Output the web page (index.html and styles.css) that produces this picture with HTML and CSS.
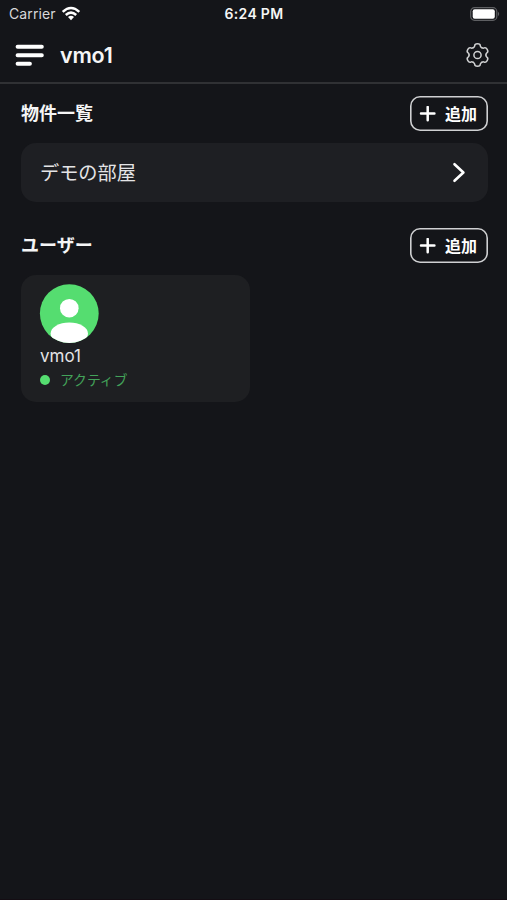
FILE: index.html
```html
<!DOCTYPE html>
<html lang="ja">
<head>
<meta charset="utf-8">
<title>vmo1</title>
<link rel="stylesheet" href="styles.css">
</head>
<body>
<div class="status">
  <div class="carrier"><span>Carrier</span>
    <svg width="20" height="16" viewBox="0 0 20 16" fill="none" stroke="#fff" stroke-width="2.5"><path d="M1.7 5.9Q10-1.9 18.3 5.9M4.8 9Q10 4.2 15.2 9"/><path d="M7 11.1Q10 8.6 13 11.1L10 14.2Z" fill="#fff" stroke="none"/></svg>
  </div>
  <time class="clock">6:24 PM</time>
  <svg class="battery" width="30" height="14" viewBox="0 0 30 14"><rect x=".7" y=".7" width="26.1" height="12.6" rx="3.8" fill="none" stroke="#5e5f62" stroke-width="1.2"/><rect x="2.7" y="2.3" width="22.1" height="9.4" rx="2" fill="#fff"/><path d="M28 4.8q2.4 2.2 0 4.4z" fill="#5e5f62"/></svg>
</div>
<header class="bar">
  <svg class="menu" width="30" height="24" viewBox="0 0 30 24" stroke="#fff" stroke-width="4" stroke-linecap="round"><path d="M2.6 3.7H26.8M2.6 12.2H26.8M2.6 20.7H14.9"/></svg>
  <h1>vmo1</h1>
  <svg class="gear" width="26" height="26" viewBox="-12.5 -13 26 26" fill="none" stroke="#d0d1d2" stroke-width="1.5" stroke-linecap="round">
    <defs><path id="tooth" d="M-4.2-7.3C-3.2-7.9-2.8-8.2-2.8-9.2C-2.8-10.8-2-11.2 0-11.2S2.8-10.8 2.8-9.2C2.8-8.2 3.2-7.9 4.2-7.3"/></defs>
    <use href="#tooth"/><use href="#tooth" transform="rotate(60)"/><use href="#tooth" transform="rotate(120)"/><use href="#tooth" transform="rotate(180)"/><use href="#tooth" transform="rotate(240)"/><use href="#tooth" transform="rotate(300)"/>
    <circle r="3.6"/>
  </svg>
</header>
<main>
  <section>
    <div class="head"><h2>物件一覧</h2>
      <button class="add"><svg width="17" height="16" viewBox="0 0 17 16" stroke="#fff" stroke-width="2.5" stroke-linecap="round"><path d="M8.7 .9V14.3M2 7.6H15.4"/></svg><span>追加</span></button></div>
    <div class="room"><span>デモの部屋</span>
      <svg width="14" height="22" viewBox="0 0 14 22" fill="none" stroke="#fff" stroke-width="2.6" stroke-linecap="round" stroke-linejoin="round"><path d="M2.5 2.2L11.4 10.5L2.5 18.8"/></svg></div>
  </section>
  <section class="users">
    <div class="head"><h2>ユーザー</h2>
      <button class="add"><svg width="17" height="16" viewBox="0 0 17 16" stroke="#fff" stroke-width="2.5" stroke-linecap="round"><path d="M8.7 .9V14.3M2 7.6H15.4"/></svg><span>追加</span></button></div>
    <div class="user">
      <svg class="avatar" width="60" height="60" viewBox="0 0 60 60"><defs><clipPath id="disc"><circle cx="30.3" cy="29.6" r="29.4"/></clipPath></defs><circle cx="30.3" cy="29.6" r="29.4" fill="#55dd70"/><g fill="#fff" clip-path="url(#disc)"><circle cx="30.3" cy="24.2" r="9.3"/><ellipse cx="30.3" cy="49.5" rx="18.7" ry="11"/></g></svg>
      <div class="name">vmo1</div>
      <div class="state"><i></i><span>アクティブ</span></div>
    </div>
  </section>
</main>
</body>
</html>
```
FILE: styles.css
```css
* { box-sizing: border-box; }
body {
  margin: 0;
  height: 900px;
  overflow: hidden;
  background: #141519;
  color: #f5f5f6;
  font-family: Inter, "Noto Sans CJK JP", sans-serif;
  border-bottom: 1px solid #140d13;
}
svg { display: block; flex: none; }
h1, h2 { margin: 0; }
.status {
  height: 27px;
  display: grid;
  grid-template-columns: 1fr auto 1fr;
  align-items: center;
  padding: 0 7px 0 9px;
  font-size: 14px;
}
.carrier { display: flex; align-items: center; gap: 5px; color: #d8d8da; letter-spacing: .1px; }
.clock { margin-right: 1px; font-weight: 600; font-size: 14px; letter-spacing: .3px; }
.battery { justify-self: end; }
.bar {
  height: 57px;
  display: flex;
  align-items: center;
  padding: 0 16px 0 15px;
  border-bottom: 2px solid #303134;
}
h1 { margin-left: 15px; font-size: 21.5px; font-weight: 600; letter-spacing: -.2px; }
.gear { margin-left: auto; }
main { padding: 12px 19px 0 21px; }
.head { height: 35px; display: flex; align-items: center; justify-content: space-between; }
h2 { font-size: 18px; line-height: 26px; font-weight: 700; }
.add {
  width: 78px;
  height: 35px;
  padding: 0 0 0 9px;
  display: flex;
  align-items: center;
  gap: 9px;
  border: 0;
  border-radius: 10px;
  background: none;
  box-shadow: inset 0 0 0 1.6px #cfd0d2;
  color: #fff;
  font: 700 16px/24px "Noto Sans CJK JP", sans-serif;
}
.add span { padding-bottom: 2px; }
.room {
  height: 59px;
  margin-top: 12px;
  padding: 0 22px 0 19px;
  display: flex;
  align-items: center;
  justify-content: space-between;
  border-radius: 15px;
  background: #1e1f23;
  color: #e4e4e6;
  font-size: 19.2px;
}
.room span { padding-bottom: 2px; }
.users { margin-top: 26px; }
.user {
  width: 229px;
  height: 127px;
  margin-top: 12px;
  padding: 9px 18px;
  border-radius: 15px;
  background: #1e1f22;
}
.name { margin: 2px 0 0 1px; font-size: 17px; line-height: 20px; color: #e4e4e6; }
.state { display: flex; align-items: center; gap: 10px; margin: 4px 0 0 1px; color: #43a35a; font-size: 13.8px; line-height: 20px; }
.state i { width: 10px; height: 10px; border-radius: 50%; background: #55dd70; }
```
